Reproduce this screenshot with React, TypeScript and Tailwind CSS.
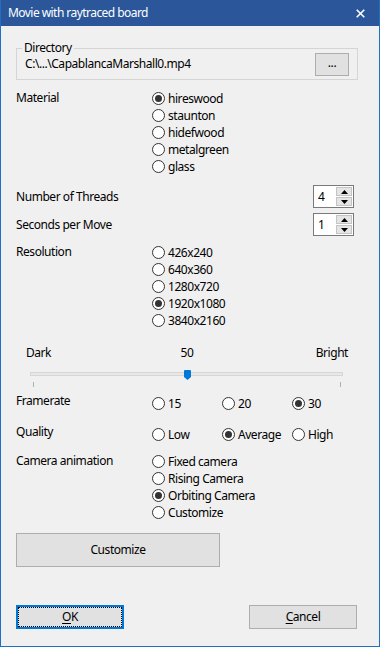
import React from "react";

function Radio({ checked = false, label }: { checked?: boolean; label: string }) {
  return (
    <div className="flex items-center h-[17px] gap-[3px]">
      <span className="w-[13px] h-[13px] rounded-full border border-[#333333] bg-white flex items-center justify-center shrink-0">
        {checked && <span className="w-[7px] h-[7px] rounded-full bg-[#333333]" />}
      </span>
      <span className="leading-[17px] whitespace-nowrap">{label}</span>
    </div>
  );
}

function Spinner({ value }: { value: string }) {
  return (
    <div className="flex w-[41px] h-[23px] border border-[#7a7a7a] bg-white mr-[4px]">
      <div className="flex-1 pl-[4px] flex items-center leading-none">{value}</div>
      <div className="w-[17px] flex flex-col gap-[1px] py-[1px] pr-[1px]">
        <div className="flex-1 bg-[#e5e5e5] border border-[#c4c4c4] flex items-center justify-center">
          <svg width="7" height="4" viewBox="0 0 7 4">
            <polygon points="0,4 7,4 3.5,0" fill="#000" />
          </svg>
        </div>
        <div className="flex-1 bg-[#e5e5e5] border border-[#c4c4c4] flex items-center justify-center">
          <svg width="7" height="4" viewBox="0 0 7 4">
            <polygon points="0,0 7,0 3.5,4" fill="#000" />
          </svg>
        </div>
      </div>
    </div>
  );
}

export default function App() {
  return (
    <div className="w-[380px] h-[647px] bg-[#f0f0f0] border-x border-b border-[#1f6fc5] flex flex-col text-[12px] tracking-[-0.45px] text-black font-['Segoe_UI','Noto_Sans',sans-serif] overflow-hidden">
      {/* Title bar */}
      <div className="h-[26px] bg-[#2b579a] -mx-px flex items-center justify-between pl-[8px] pr-[15px] shrink-0">
        <span className="text-white text-[12px] tracking-[-0.55px] leading-none">Movie with raytraced board</span>
        <svg width="9" height="9" viewBox="0 0 9 9">
          <path d="M0.7 0.7 L8.3 8.3 M8.3 0.7 L0.7 8.3" stroke="#fff" strokeWidth="1.6" />
        </svg>
      </div>

      <div className="flex flex-col pl-[15px] pr-[21px]">
        {/* Directory group */}
        <div className="relative mt-[22px] h-[32px] border border-[#d5d5d5] flex items-center justify-between pl-[8px] pr-[8px]">
          <span className="absolute left-[5px] top-[-9px] px-[2px] bg-[#f0f0f0] leading-[16px]">Directory</span>
          <span className="leading-[16px]">C:\...\CapablancaMarshall0.mp4</span>
          <div className="w-[34px] h-[23px] bg-[#e1e1e1] border border-[#adadad] flex items-center justify-center leading-none pb-[2px]">
            ...
          </div>
        </div>

        {/* Material */}
        <div className="flex mt-[10px]">
          <div className="w-[136px] leading-[15px] shrink-0">Material</div>
          <div className="flex flex-col">
            <Radio checked label="hireswood" />
            <Radio label="staunton" />
            <Radio label="hidefwood" />
            <Radio label="metalgreen" />
            <Radio label="glass" />
          </div>
        </div>

        {/* Number of threads */}
        <div className="flex items-center justify-between mt-[10px]">
          <span>Number of Threads</span>
          <Spinner value="4" />
        </div>
        <div className="flex items-center justify-between mt-[5px]">
          <span>Seconds per Move</span>
          <Spinner value="1" />
        </div>

        {/* Resolution */}
        <div className="flex mt-[8px]">
          <div className="w-[136px] leading-[15px] shrink-0">Resolution</div>
          <div className="flex flex-col">
            <Radio label="426x240" />
            <Radio label="640x360" />
            <Radio label="1280x720" />
            <Radio checked label="1920x1080" />
            <Radio label="3840x2160" />
          </div>
        </div>

        {/* Brightness labels */}
        <div className="grid grid-cols-[1fr_auto_1fr] mt-[16px] ml-[10px] mr-[10px] leading-[16px]">
          <span>Dark</span>
          <span>50</span>
          <span className="justify-self-end">Bright</span>
        </div>

        {/* Slider */}
        <div className="relative h-[27px]">
          <div className="absolute left-[14px] top-[11px] w-[313px] h-[4px] bg-[#e7e7e7] border border-[#d6d6d6]" />
          <svg className="absolute left-[168px] top-[9px]" width="7" height="10" viewBox="0 0 7 10">
            <path d="M1 0 H6 Q7 0 7 1 V7 L3.5 10 L0 7 V1 Q0 0 1 0 Z" fill="#0078d7" />
          </svg>
          <div className="absolute left-[17px] top-[21px] w-px h-[5px] bg-[#b0b0b0]" />
          <div className="absolute left-[324px] top-[21px] w-px h-[5px] bg-[#b0b0b0]" />
        </div>

        {/* Framerate */}
        <div className="flex mt-[4px]">
          <div className="w-[136px] leading-[17px] shrink-0">Framerate</div>
          <div className="grid grid-cols-[70px_70px_auto] mt-[3px]">
            <Radio label="15" />
            <Radio label="20" />
            <Radio checked label="30" />
          </div>
        </div>

        {/* Quality */}
        <div className="flex mt-[11px]">
          <div className="w-[136px] leading-[17px] shrink-0">Quality</div>
          <div className="grid grid-cols-[70px_70px_auto] mt-[3px]">
            <Radio label="Low" />
            <Radio checked label="Average" />
            <Radio label="High" />
          </div>
        </div>

        {/* Camera animation */}
        <div className="flex mt-[10px]">
          <div className="w-[136px] leading-[15px] shrink-0">Camera animation</div>
          <div className="flex flex-col">
            <Radio label="Fixed camera" />
            <Radio label="Rising Camera" />
            <Radio checked label="Orbiting Camera" />
            <Radio label="Customize" />
          </div>
        </div>

        {/* Customize button */}
        <div className="mt-[12px] w-[204px] h-[34px] bg-[#e1e1e1] border border-[#adadad] flex items-center justify-center">
          Customize
        </div>

        {/* OK / Cancel */}
        <div className="flex justify-between mt-[38px] mr-[1px]">
          <div className="w-[108px] h-[24px] bg-[#e1e1e1] border-2 border-[#0078d7] outline-1 outline-dotted outline-black outline-offset-[-3px] flex items-center justify-center">
            <span>
              <u className="underline-offset-2">O</u>K
            </span>
          </div>
          <div className="w-[108px] h-[24px] bg-[#e1e1e1] border border-[#adadad] flex items-center justify-center">
            <span>
              <u className="underline-offset-2">C</u>ancel
            </span>
          </div>
        </div>
      </div>
    </div>
  );
}
